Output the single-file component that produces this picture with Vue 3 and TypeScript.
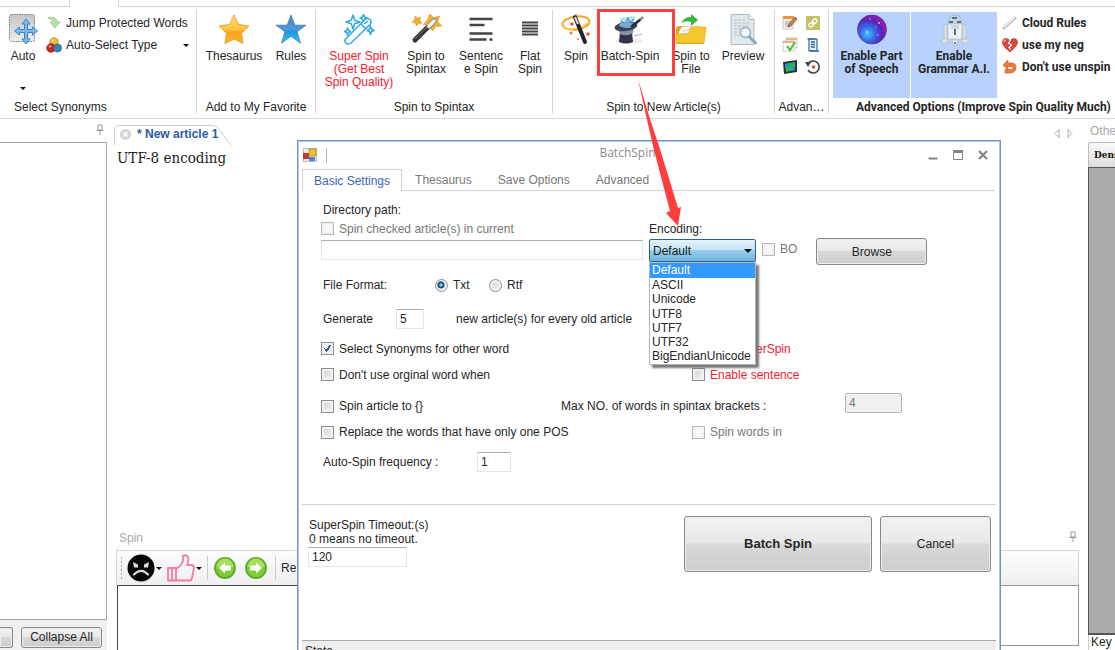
<script setup lang="ts">
import { ref } from 'vue'

const encodings = ['Default', 'ASCII', 'Unicode', 'UTF8', 'UTF7', 'UTF32', 'BigEndianUnicode']
const encoding = ref('Default')
const format = ref('txt')
const settingsTabs = ['Basic Settings', 'Thesaurus', 'Save Options', 'Advanced']
const activeTab = ref('Basic Settings')
const directory = ref('')
const articleCount = ref('5')
const maxWords = ref('4')
const frequency = ref('1')
const timeout = ref('120')
const selectSynonyms = ref(true)
</script>

<template>
  <div class="app">
    <div class="tabstrip">
      <span class="strip-start"></span>
      <span class="strip-active"></span>
      <span class="strip-rest"></span>
    </div>

    <header class="ribbon">
      <section class="group g-select">
        <div class="tools">
          <button class="big w-auto">
            <svg width="30" height="32" viewBox="0 0 30 32">
              <defs>
                <linearGradient id="sq" x1="0" y1="0" x2="0" y2="1"><stop offset="0" stop-color="#c2c4c8" /><stop offset="1" stop-color="#eceef0" /></linearGradient>
              </defs>
              <rect x="1.500" y="0.500" width="25" height="27" rx="2" fill="url(#sq)" stroke="#777" stroke-dasharray="1.500 1" />
              <path d="M18 5l4 5h-2.500v5.500h5V13l5 4-5 4v-2.500h-5V25H22l-4 5-4-5h2.500v-6.500h-5V21l-5-4 5-4v2.500h5V10H14z" fill="#7db9ee" stroke="#3c82c6" stroke-width="1" />
            </svg>
            <span>Auto</span>
            <i class="caret auto-caret"></i>
          </button>
          <div class="list">
            <button class="small">
              <svg width="16" height="16" viewBox="0 0 16 16"><path d="M2 3c5-2 9 0 9 4h3l-5 6-5-6h3c0-2-2-3-5-4z" fill="#b9dcaa" stroke="#96c588" stroke-width="0.800" /></svg>
              <span>Jump Protected Words</span>
            </button>
            <button class="small">
              <svg width="16" height="16" viewBox="0 0 16 16">
                <circle cx="8" cy="5" r="4.200" fill="#e8b93a" stroke="#ad7c14" stroke-width="0.700" />
                <circle cx="5" cy="11" r="4.300" fill="#d3201b" stroke="#8e1d18" stroke-width="0.700" />
                <circle cx="11.500" cy="11" r="4" fill="#3a84ba" stroke="#24597f" stroke-width="0.700" />
                <circle cx="4" cy="9.500" r="1.300" fill="#f19a90" /><circle cx="7" cy="3.500" r="1.200" fill="#fce69a" />
              </svg>
              <span>Auto-Select Type</span>
              <i class="caret type-caret"></i>
            </button>
          </div>
        </div>
        <p class="caption at-left">Select Synonyms</p>
      </section>

      <section class="group g-favorite">
        <div class="tools">
          <button class="big w-64">
            <svg width="32" height="32" viewBox="0 0 32 32">
              <defs><linearGradient id="gold" x1="0" y1="0" x2="0" y2="1"><stop offset="0" stop-color="#ffe070" /><stop offset="0.500" stop-color="#ffc544" /><stop offset="0.600" stop-color="#fba31a" /><stop offset="1" stop-color="#fbb02c" /></linearGradient></defs>
              <path d="M16 1l4.500 9.500L31 12l-7.500 7.500L25 29.500l-9-4.500-9 4.500 1.500-10L1 12l10.500-1.500z" fill="url(#gold)" stroke="#e8a33a" stroke-linejoin="round" />
            </svg>
            <span>Thesaurus</span>
          </button>
          <button class="big w-50">
            <svg width="32" height="32" viewBox="0 0 32 32">
              <defs><linearGradient id="blue" x1="0" y1="0" x2="0" y2="1"><stop offset="0" stop-color="#4a86cc" /><stop offset="0.500" stop-color="#4f97dc" /><stop offset="0.600" stop-color="#1d97dd" /><stop offset="1" stop-color="#36cdf5" /></linearGradient></defs>
              <path d="M16 1l3.800 10.200H31l-9 6.500 3.500 11.500-9.500-7-9.500 7L10 17.700l-9-6.500h11.200z" fill="url(#blue)" stroke="#3c76b8" stroke-width="0.800" stroke-linejoin="round" />
            </svg>
            <span>Rules</span>
          </button>
        </div>
        <p class="caption">Add to My Favorite</p>
      </section>

      <section class="group g-spintax">
        <div class="tools">
          <button class="big w-86 red">
            <svg width="32" height="32" viewBox="0 0 32 32" fill="#fff" stroke="#30a9df" stroke-width="1.500" stroke-linejoin="round">
              <path d="M10 1l1.700 5.300L17 8l-5.300 1.700L10 15l-1.700-5.300L3 8l5.300-1.700z" />
              <path d="M20.500 0.500l1 2.500 2.500 1-2.500 1-1 2.500-1-2.500-2.500-1 2.500-1zM27.500 12l1 3 2.500 1.500-2.500 1-1 3-1-3-2.500-1L26.500 15zM4.500 14l1 2.500 2 1-2 1-1 2.500-1-2.500-2-1 2-1z" />
              <path d="M2.500 25L22 5.500q3-2 5 0t0 5L8 29q-3 2-5 0t-0.500-4z" />
              <path d="M18 10l5 5M21 10l4-3" fill="none" />
            </svg>
            <span>Super Spin<br>(Get Best<br>Spin Quality)</span>
          </button>
          <button class="big w-48">
            <svg width="32" height="32" viewBox="0 0 32 32">
              <path d="M20 0l3.500 4 6-2-2 5.500 4 4.500-6 .5-3 4.500-3-5-6-1.500 4-4.500z" fill="#f8b52b" stroke="#df8f16" stroke-width="0.700" />
              <path d="M5 2l2.500 2 3-.8L10 6.500l2 2.700-3.500.3L6.500 12 5.200 9 2 8l2.500-2z" fill="#f5ae28" stroke="#df8f16" stroke-width="0.500" />
              <path d="M5 26L19 12" stroke="#353535" stroke-width="5" stroke-linecap="round" />
              <path d="M19 12l5-5" stroke="#888" stroke-width="5.500" stroke-linecap="round" />
              <path d="M19 12l5-5" stroke="#f0f0f0" stroke-width="3.500" stroke-linecap="round" />
              <path d="M5 25l12-12" stroke="#777" stroke-width="1" />
            </svg>
            <span>Spin to<br>Spintax</span>
          </button>
          <button class="big w-62">
            <svg width="32" height="32" viewBox="0 0 32 32"><path d="M4.500 5h23M4.500 11h15M4.500 19.500h23M4.500 25.500h17M24.500 25.500h3" stroke="#444" stroke-width="2.600" /></svg>
            <span>Sentenc<br>e Spin</span>
          </button>
          <button class="big w-36">
            <svg width="32" height="32" viewBox="0 0 32 32"><path d="M8 8.500h16M8 11.500h16M8 14.500h16M8 17.500h16M8 20.500h16" stroke="#444" stroke-width="1.800" /></svg>
            <span>Flat<br>Spin</span>
          </button>
        </div>
        <p class="caption">Spin to Spintax</p>
      </section>

      <section class="group g-article">
        <div class="tools">
          <button class="big w-46">
            <svg width="32" height="32" viewBox="0 0 32 32">
              <ellipse cx="16" cy="9" rx="13.500" ry="6.500" fill="none" stroke="#f6a21b" stroke-width="2" transform="rotate(-8 16 9)" />
              <path d="M3 12q8 8 26-4" fill="none" stroke="#ffd15a" stroke-width="1.500" />
              <path d="M15 3L25 28" stroke="#25242a" stroke-width="4" stroke-linecap="round" /><path d="M15 3l3 7" stroke="#ddd" stroke-width="2" />
              <circle cx="12" cy="10" r="1.800" fill="#e9562c" /><circle cx="11" cy="19" r="1.500" fill="#ed7c48" /><circle cx="28" cy="20" r="1.800" fill="#e9562c" /><circle cx="18" cy="25" r="1" fill="#ed7c48" /><circle cx="16" cy="1" r="1" fill="#ed7c48" />
            </svg>
            <span>Spin</span>
          </button>
          <button class="big w-62">
            <svg width="32" height="32" viewBox="0 0 32 32">
              <path d="M6 4l15-2-2 10H5z" fill="#b9e3f6" /><path d="M7 7l4 3 3-6 2 5 4-4" stroke="#45a6e2" fill="none" stroke-width="1.500" />
              <ellipse cx="15" cy="27" rx="14" ry="2.500" fill="#ececec" />
              <path d="M6 18l-1 10q7 3 14 0l-1-10z" fill="#353348" /><path d="M4 14q8 5 16-1l-1 6q-6 4-13 1z" fill="#8a93ad" />
              <ellipse cx="12" cy="12.500" rx="11.500" ry="4.500" transform="rotate(-7 12 12.500)" fill="#3b4052" /><ellipse cx="13" cy="11" rx="8" ry="3" fill="#77a9cf" />
              <path d="M17 13L27 5" stroke="#272b38" stroke-width="2.600" /><path d="M26 6l3-3" stroke="#888" stroke-width="2.400" /><path d="M20 22l8-2" stroke="#aaa" />
              <circle cx="10" cy="4" r="1" fill="#eed85c" /><circle cx="17" cy="3" r="1" fill="#eed85c" />
            </svg>
            <span>Batch-Spin</span>
          </button>
          <button class="big w-60">
            <svg width="32" height="32" viewBox="0 0 32 32">
              <path d="M1 14l2-2h7l2 2h17v16H1z" fill="#dfa31c" />
              <path d="M4 18l3-5 17-1 3 3v8H4z" fill="#f8f8f4" stroke="#ddd" /><path d="M7 17l12-2M7 20l14-2" stroke="#d0d0d0" />
              <path d="M1 29V20h12l3-7h15l-2 16z" fill="#f7c72d" stroke="#e3ad20" stroke-width="0.700" />
              <path d="M6 9q4-7 10-6V0l7 6-7 6V8q-5-2-10 1z" fill="#35b63d" />
            </svg>
            <span>Spin to<br>File</span>
          </button>
          <button class="big w-44">
            <svg width="32" height="32" viewBox="0 0 32 32">
              <path d="M4 0.500h18l5 5v25H4z" fill="#e2e9ed" stroke="#aebac1" /><path d="M22 0.500v5h5" fill="#f8fafb" stroke="#aebac1" />
              <path d="M7 6h12M7 9h16M7 12h16M7 15h8M7 18h7M7 21h7" stroke="#b4bec5" stroke-width="1" stroke-dasharray="3 1" />
              <circle cx="18.500" cy="18.500" r="5" fill="#f2f8fc" stroke="#a7b7c3" stroke-width="1.800" /><path d="M22.500 23l6 6" stroke="#8ca6b9" stroke-width="3" stroke-linecap="round" />
            </svg>
            <span>Preview</span>
          </button>
        </div>
        <p class="caption">Spin to New Article(s)</p>
      </section>

      <section class="group g-advan">
        <div class="mini">
          <button aria-label="Edit rules"><svg width="16" height="16" viewBox="0 0 16 16"><path d="M1 2h10v12H1z" fill="#eee" stroke="#ccc" /><path d="M1 1h11v3H1z" fill="#e9963e" /><path d="M3 7h6M3 9h5M3 11h4" stroke="#aaa" /><path d="M6 12l1-3 6-7 2 2-6 7z" fill="#c8833e" stroke="#71462a" stroke-width="0.700" /></svg></button>
          <button aria-label="Links"><svg width="16" height="16" viewBox="0 0 16 16"><rect x="1" y="1" width="14" height="14" rx="1" fill="#c4c262" /><g transform="rotate(-45 8 8)" fill="none" stroke="#fff" stroke-width="1.200"><rect x="3" y="6" width="5" height="4" rx="2" /><rect x="8" y="6" width="5" height="4" rx="2" /><path d="M6 8h4" /></g></svg></button>
          <button aria-label="Check articles"><svg width="16" height="16" viewBox="0 0 16 16"><path d="M4 1h11v10H4z" fill="#f4f4f2" stroke="#ccc" /><path d="M4 1h11v2H4z" fill="#e7b67c" /><path d="M1 4h11v10H1z" fill="#fff" stroke="#ccc" /><path d="M1 4h11v2H1z" fill="#e7b67c" /><path d="M5 9l3 4 5-8" fill="none" stroke="#5fbd43" stroke-width="2.200" /></svg></button>
          <button aria-label="Script"><svg width="16" height="16" viewBox="0 0 16 16"><path d="M4 2h8v12H4z" fill="#e7eff8" stroke="#39689f" stroke-width="1.200" /><path d="M2.500 2h8M5 14h9M6 5h4M6 7.500h4M6 10h4" stroke="#39689f" stroke-width="1.300" /></svg></button>
          <button aria-label="Map"><svg width="16" height="16" viewBox="0 0 16 16"><path d="M1 3l14-2v12L2 15z" fill="#29333c" /><path d="M3 5l10-2v8L4 13z" fill="#24b855" /><path d="M3 5l5-1-1 4-4 1zM10 8l3-1v4l-4 1z" fill="#2b8fc9" /></svg></button>
          <button aria-label="Restore"><svg width="16" height="16" viewBox="0 0 16 16"><path d="M3 5a6 6 0 1 1 0 6" fill="none" stroke="#444" stroke-width="1.600" /><path d="M0 3l6 0-3 5z" fill="#444" /><circle cx="8.500" cy="8" r="1.700" fill="#e14a36" /></svg></button>
        </div>
        <p class="caption">Advan…</p>
      </section>

      <section class="group g-options">
        <div class="tools">
          <button class="big on w-77">
            <svg width="32" height="32" viewBox="0 0 32 32">
              <defs><radialGradient id="orb" cx="0.350" cy="0.650" r="0.700"><stop offset="0" stop-color="#40d0f8" /><stop offset="0.350" stop-color="#376bea" /><stop offset="0.700" stop-color="#5924b5" /><stop offset="1" stop-color="#a221a9" /></radialGradient></defs>
              <circle cx="16" cy="15.500" r="14.500" fill="url(#orb)" stroke="#4b1d94" stroke-width="0.600" /><g fill="#d9c9ff"><circle cx="14" cy="5" r="0.700" /><circle cx="23" cy="9" r="0.900" /><circle cx="20" cy="13" r="0.600" /><circle cx="11" cy="18" r="0.900" /><circle cx="22" cy="21" r="0.700" /></g>
            </svg>
            <span>Enable Part<br>of Speech</span>
          </button>
          <button class="big on w-86">
            <svg width="32" height="32" viewBox="0 0 32 32">
              <path d="M10 10q0-9 7-9t7 9z" fill="#c9d2d8" stroke="#a3afb6" stroke-width="0.700" /><path d="M14 3h5v2h-5zM11 7h4v2h-4zM19 7h4v2h-4z" fill="#4476a9" />
              <path d="M10 10h14v15H10z" fill="#eef0f0" stroke="#b5bdc0" stroke-width="0.700" /><path d="M6 11h3v14H6zM25 11h3v14h-3z" fill="#dde2e3" stroke="#b5bdc0" stroke-width="0.700" /><path d="M4 25h6v4H4zM24 25h6v4h-6z" fill="#dfe3e5" stroke="#b5bdc0" stroke-width="0.700" />
              <path d="M13 12h8M13 14h8" stroke="#aeb9be" /><path d="M16 15h2v6h-2z" fill="#3676ad" /><path d="M14 26h6l-1 5h-4z" fill="#e9ebec" stroke="#b5bdc0" stroke-width="0.700" /><circle cx="17" cy="29" r="1" fill="#3676ad" />
            </svg>
            <span>Enable<br>Grammar A.I.</span>
          </button>
          <div class="list strong">
            <button class="small"><svg width="16" height="16" viewBox="0 0 16 16"><path d="M2 13L13 3" stroke="#b9b9b9" stroke-width="3" stroke-linecap="round" /><path d="M2 12.500L13 2.500" stroke="#ececec" stroke-width="1.500" /></svg><span>Cloud Rules</span></button>
            <button class="small"><svg width="16" height="16" viewBox="0 0 16 16"><path d="M8 15Q0 9 0.500 5T4 1.500q3 0 4 3 1-3 4-3t3.500 3.500T8 15z" fill="#d9473f" stroke="#aa2e2a" stroke-width="0.600" /><path d="M8.500 3l-2 3 3 2-2.500 2.500 1.500 2" fill="none" stroke="#fff" stroke-width="1.200" /><path d="M2 5q0-2 2-2" stroke="#f5aaa4" fill="none" stroke-width="1.500" /></svg><span>use my neg</span></button>
            <button class="small"><svg width="16" height="16" viewBox="0 0 16 16"><path d="M6 1v3h4q4 0 4 4.500T9 14H3v-3.500h6q2 0 2-1.500T9 7.500H6V11L1 6z" fill="#ec7832" stroke="#cf5e1e" stroke-width="0.600" /></svg><span>Don't use unspin</span></button>
          </div>
        </div>
        <p class="caption strong at-option">Advanced Options (Improve Spin Quality Much)</p>
      </section>
    </header>

    <main class="workspace">
      <aside class="tree">
        <div class="tree-head"><svg class="pin" width="8" height="11" viewBox="0 0 8 11"><path d="M2 1h4v5H2zM0.500 6.500h7M4 7v4" fill="none" stroke="#999" /></svg></div>
        <div class="tree-box"></div>
        <div class="tree-foot">
          <button class="win-btn stub" aria-label="Expand all"></button>
          <button class="win-btn collapse">Collapse All</button>
        </div>
      </aside>

      <section class="center">
        <div class="doc-tabs">
          <button class="doc-tab">
            <svg class="tab-shape" width="120" height="20" viewBox="0 0 120 20"><path d="M0.500 20V4q0-3.500 4-3.500h94q4 0 7 4l7 10q2 4 5 5" fill="none" stroke="#ccc" /></svg>
            <svg width="11" height="11" viewBox="0 0 11 11"><circle cx="5.500" cy="5.500" r="5.500" fill="#d5d5d5" /><path d="M3.500 3.500l4 4M7.500 3.500l-4 4" stroke="#fff" stroke-width="1.500" /></svg>
            <span>* New article 1</span>
          </button>
          <svg class="nav" width="20" height="9" viewBox="0 0 20 9"><path d="M5 0.500v8L1 4.500zM14 0.500v8l4-4z" fill="none" stroke="#aaa" /></svg>
        </div>
        <div class="document">UTF-8 encoding</div>
        <div class="spin-head"><span>Spin</span><svg class="pin" width="8" height="11" viewBox="0 0 8 11"><path d="M2 1h4v5H2zM0.500 6.500h7M4 7v4" fill="none" stroke="#999" /></svg></div>
        <div class="toolbar">
          <i class="grip"></i>
          <button aria-label="Dislike"><svg width="28" height="28" viewBox="0 0 28 28"><circle cx="14" cy="14" r="13.500" fill="#050505" /><path d="M6 8l5 2.500v3H7zM22 8l-5 2.500v3h4z" fill="#ddd" /><path d="M7 20.500q7-7 14 0" fill="none" stroke="#ddd" stroke-width="2.200" stroke-linecap="round" /></svg><i class="caret"></i></button>
          <button aria-label="Like"><svg width="28" height="28" viewBox="0 0 28 28"><path d="M1 14h8v12.500H1zM5 14v12.500M9 15q5-3 7-8V2q3-2 5 1 1 3-1 8h5q2 0 2 3l-2 10q0 2.500-3 2.500H9z" fill="none" stroke="#fa79a4" stroke-width="1.800" stroke-linejoin="round" /></svg><i class="caret"></i></button>
          <i class="sep"></i>
          <button aria-label="Back" class="round"><svg width="24" height="24" viewBox="0 0 24 24"><circle cx="12" cy="12" r="10" fill="#82cb38" stroke="#5eaa2a" stroke-width="1.800" /><path d="M3.500 11a8.500 8.500 0 0 1 17 0z" fill="#a6df5a" /><path d="M6 12l6-5.500v3h6v5h-6v3z" fill="#fff" /></svg></button>
          <button aria-label="Forward" class="round"><svg width="24" height="24" viewBox="0 0 24 24"><circle cx="12" cy="12" r="10" fill="#82cb38" stroke="#5eaa2a" stroke-width="1.800" /><path d="M3.500 11a8.500 8.500 0 0 1 17 0z" fill="#a6df5a" /><path d="M18 12l-6-5.500v3H6v5h6v3z" fill="#fff" /></svg></button>
          <i class="sep"></i>
          <span>Re</span>
        </div>
        <div class="result">
          <div class="result-left"></div>
          <div class="result-right"></div>
        </div>
      </section>

      <aside class="others">
        <div class="others-head">Others</div>
        <div class="others-tab">Density</div>
        <div class="others-body"></div>
        <div class="others-key">Key</div>
      </aside>
    </main>

    <section class="dialog" role="dialog" aria-label="BatchSpin">
      <div class="titlebar">
        <svg width="14" height="14" viewBox="0 0 14 14"><rect x="0.500" y="0.500" width="13" height="13" fill="#eee" stroke="#bbb" /><path d="M0 5h6v6H0z" fill="#c8372e" /><path d="M6 1h7v7H6z" fill="#f3be2e" stroke="#b38411" stroke-width="0.700" /><path d="M6 9h6v4H6z" fill="#4a84e0" /></svg>
        <i class="title-sep"></i>
        <h1>BatchSpin</h1>
        <div class="win-controls">
          <button aria-label="Minimize"><svg width="10" height="10" viewBox="0 0 10 10"><path d="M0.500 8.500h9" stroke="#858585" stroke-width="2" /></svg></button>
          <button aria-label="Maximize"><svg width="10" height="10" viewBox="0 0 10 10"><path d="M0.500 0.500h9v9h-9z" fill="none" stroke="#858585" /><path d="M0 1.500h10" stroke="#858585" stroke-width="3" /></svg></button>
          <button aria-label="Close"><svg width="10" height="10" viewBox="0 0 10 10"><path d="M1 1l8 8M9 1L1 9" stroke="#858585" stroke-width="2.200" /></svg></button>
        </div>
      </div>

      <nav class="tabs" role="tablist">
        <button v-for="tab in settingsTabs" :key="tab" role="tab" :class="{ active: tab === activeTab }" :aria-selected="tab === activeTab" @click="activeTab = tab">{{ tab }}</button>
      </nav>

      <form class="settings" @submit.prevent>
        <div class="row r-path"><label class="inset" for="dir">Directory path:</label></div>
        <div class="row r-current">
          <label class="check off col-a"><input type="checkbox" disabled>Spin checked article(s) in current</label>
          <label for="enc">Encoding:</label>
        </div>
        <div class="row r-dir">
          <input id="dir" v-model="directory" class="text dir" type="text">
          <div class="combo">
            <select id="enc" v-model="encoding"><option v-for="name in encodings" :key="name">{{ name }}</option></select>
            <i class="caret combo-caret"></i>
            <ul class="options" aria-label="Encoding choices">
              <li v-for="name in encodings" :key="name" :class="{ picked: name === encoding }" @click="encoding = name">{{ name }}</li>
            </ul>
          </div>
          <label class="check off bo"><input type="checkbox" disabled>BO</label>
          <button type="button" class="win-btn browse">Browse</button>
        </div>
        <div class="row r-format">
          <span class="inset format-label">File Format:</span>
          <label class="check radio"><input v-model="format" type="radio" name="format" value="txt">Txt</label>
          <label class="check radio"><input v-model="format" type="radio" name="format" value="rtf">Rtf</label>
        </div>
        <div class="row r-count">
          <label class="inset count-label" for="count">Generate</label>
          <input id="count" v-model="articleCount" class="text count" type="text">
          <span class="count-note">new article(s) for every old article</span>
        </div>
        <div class="row r-synonym">
          <label class="check col-b"><input v-model="selectSynonyms" type="checkbox">Select Synonyms for other word</label>
          <label class="check red"><input type="checkbox">Use SuperSpin</label>
        </div>
        <div class="row r-original">
          <label class="check col-b"><input type="checkbox">Don't use orginal word when</label>
          <label class="check red"><input type="checkbox">Enable sentence</label>
        </div>
        <div class="row r-article">
          <label class="check col-c"><input type="checkbox">Spin article to {}</label>
          <label class="max-label" for="max">Max NO. of words in spintax brackets :</label>
          <input id="max" v-model="maxWords" class="text max" type="text" disabled>
        </div>
        <div class="row r-replace">
          <label class="check col-b"><input type="checkbox">Replace the words that have only one POS</label>
          <label class="check off"><input type="checkbox" disabled>Spin words in</label>
        </div>
        <div class="row r-frequency">
          <label class="inset freq-label" for="freq">Auto-Spin frequency :</label>
          <input id="freq" v-model="frequency" class="text freq" type="text">
        </div>
      </form>

      <footer class="actions">
        <div class="timeout">
          <label for="timeout">SuperSpin Timeout:(s)<br>0 means no timeout.</label>
          <input id="timeout" v-model="timeout" class="text" type="text">
        </div>
        <button class="win-btn batch">Batch Spin</button>
        <button class="win-btn cancel">Cancel</button>
      </footer>
      <div class="status">State</div>
    </section>

    <div class="highlight"></div>
    <svg class="arrow" width="50" height="150" viewBox="0 0 50 150"><path d="M1 1L10 42l7 30 16 61-4 2 12 13 3-19-3 1L23 71 13 41z" fill="#ff3d3d" /></svg>
  </div>
</template>

<style>
body {
  margin: 0;
  overflow: hidden;
}
</style>

<style scoped>
* {
  box-sizing: border-box;
}
.app {
  position: relative;
  display: flex;
  flex-direction: column;
  height: 100vh;
  overflow: hidden;
  background: #fff;
  color: #262626;
  font: 12px/14px "Liberation Sans", Arial, sans-serif;
}
button {
  margin: 0;
  padding: 0;
  border: 0;
  background: none;
  color: inherit;
  font: inherit;
}
svg {
  display: block;
  flex: none;
}
.caret {
  width: 0;
  height: 0;
  border: 3px solid transparent;
  border-top-color: #111;
  border-bottom: 0;
}

/* Ribbon */
.tabstrip {
  display: flex;
  flex: none;
  height: 7px;
}
.strip-start {
  width: 69px;
  border-bottom: 1px solid #d4d4d4;
}
.strip-active {
  width: 50px;
  border: 1px solid #d4d4d4;
  border-width: 0 1px;
}
.strip-rest {
  flex: 1;
  border-bottom: 1px solid #d4d4d4;
}
.ribbon {
  display: flex;
  flex: none;
  padding: 3px 0 4px;
  border-bottom: 1px solid #d8d8d8;
}
.group {
  display: flex;
  flex: none;
  flex-direction: column;
  height: 104px;
  border-right: 1px solid #d6d6d6;
}
.g-select { width: 197px; }
.g-favorite { width: 119px; }
.g-favorite .tools { padding-left: 5px; }
.g-spintax { width: 237px; }
.g-article { width: 222px; }
.g-advan { width: 54px; }
.g-options {
  flex: 1;
  min-width: 0;
  padding-left: 4px;
  border-right: 0;
}
.tools {
  display: flex;
  flex: 1;
}
.big {
  display: flex;
  flex: none;
  flex-direction: column;
  align-items: center;
  gap: 4px;
  padding-top: 4px;
  line-height: 13px;
}
.w-auto { width: 46px; }
.w-36 { width: 36px; }
.w-44 { width: 44px; }
.w-46 { width: 46px; }
.w-48 { width: 48px; }
.w-50 { width: 50px; }
.w-60 { width: 60px; }
.w-62 { width: 62px; }
.w-64 { width: 64px; }
.w-77 { width: 77px; }
.w-86 { width: 86px; }
.auto-caret { margin-top: 20px; }
.red { color: #f5202c; }
.on {
  height: 86px;
  margin: 2px 1px 0 0;
  padding-top: 2px;
  background: #b8d2fd;
}
.on,
.strong {
  font-family: Roboto, "Liberation Sans", sans-serif;
  font-weight: bold;
}
.list {
  display: flex;
  flex-direction: column;
  padding-top: 2px;
}
.small {
  display: flex;
  align-items: center;
  gap: 4px;
  height: 22px;
  white-space: nowrap;
}
.type-caret { margin-left: 22px; }
.on + .list { padding-left: 4px; }
.caption {
  flex: none;
  margin: 0;
  text-align: center;
  white-space: nowrap;
}
.at-left {
  padding-left: 14px;
  text-align: left;
}
.at-option {
  padding-left: 23px;
  text-align: left;
}
.mini {
  display: grid;
  flex: 1;
  grid-template-columns: 16px 16px;
  grid-auto-rows: 22px;
  align-items: center;
  column-gap: 7px;
  padding: 2px 0 0 7px;
}

/* Workspace */
.workspace {
  display: flex;
  flex: 1;
  min-height: 0;
}
.tree {
  display: flex;
  flex: none;
  flex-direction: column;
  width: 107px;
}
.tree-head {
  display: flex;
  justify-content: flex-end;
  height: 23px;
  padding: 5px 3px 0 0;
}
.tree-box {
  flex: 1;
  border: 1px solid #a3a5ab;
  border-left: 0;
}
.tree-foot {
  display: flex;
  align-items: center;
  gap: 8px;
  height: 30px;
  padding-top: 4px;
  background: #f0f0f0;
}
.win-btn {
  border: 1px solid #898989;
  border-radius: 3px;
  background: linear-gradient(#f3f3f3, #e8e8e8 48%, #d9d9d9 50%, #cdcdcd);
  box-shadow: inset 0 0 0 1px #ececec;
}
.stub {
  width: 13px;
  height: 21px;
  border-left: 0;
  border-radius: 0 3px 3px 0;
}
.collapse {
  width: 81px;
  height: 21px;
}
.center {
  display: flex;
  flex: 1;
  flex-direction: column;
  min-width: 0;
  padding: 6px 9px 0 7px;
}
.doc-tabs {
  display: flex;
  align-items: flex-start;
  justify-content: space-between;
}
.doc-tab {
  position: relative;
  display: flex;
  align-items: center;
  gap: 6px;
  height: 18px;
  padding-left: 6px;
  color: #2c5ba2;
  font-weight: bold;
}
.tab-shape {
  position: absolute;
  top: 0;
  left: 0;
}
.nav { margin: 4px 5px 0 0; }
.document {
  flex: 1;
  padding: 5px 0 0 3px;
  color: #222;
  font: 15px/20px "DejaVu Serif Condensed", "DejaVu Serif", serif;
}
.spin-head {
  display: flex;
  justify-content: space-between;
  height: 20px;
  padding: 1px 2px 0 5px;
  color: #aaa;
}
.toolbar {
  display: flex;
  flex: none;
  align-items: center;
  height: 35px;
  margin-left: 2px;
  padding-left: 4px;
  border: 1px solid #d6d6d6;
  border-bottom: 0;
  background: linear-gradient(#fdfdfd, #efefef);
}
.toolbar button {
  display: flex;
  align-items: center;
  gap: 1px;
  margin-right: 5px;
}
.grip {
  width: 1px;
  height: 22px;
  margin-right: 5px;
  background: repeating-linear-gradient(#aaa 0 2px, transparent 2px 4px);
}
.sep {
  width: 1px;
  height: 24px;
  margin-right: 5px;
  background: #ccc;
}
.toolbar .round { margin-right: 7px; }
.result {
  display: flex;
  flex: none;
  height: 65px;
  margin-left: 3px;
}
.result-left {
  width: 300px;
  border: 1px solid #444;
  border-width: 1px 0 0 1px;
}
.result-right {
  flex: 1;
  height: 61px;
  border: 1px solid #92959b;
  border-left: 0;
}
.others {
  display: flex;
  flex: none;
  flex-direction: column;
  width: 27px;
  overflow: hidden;
}
.others-head {
  height: 23px;
  padding: 5px 0 0 2px;
  color: #aaa;
}
.others-tab {
  height: 25px;
  padding: 5px 0 0 5px;
  border: 1px solid #bbb;
  border-width: 1px 0 0 1px;
  border-radius: 3px 0 0;
  background: linear-gradient(#fafafa, #ddd);
  color: #111;
  font: bold 10px/13px "DejaVu Serif Condensed", "DejaVu Serif", serif;
}
.others-body {
  flex: 1;
  border: 1px solid #555;
  border-width: 1px 0 2px 1px;
  background: #ababab;
}
.others-key {
  height: 15px;
  padding-left: 2px;
  border-left: 1px solid #ccc;
}

/* Batch dialog */
.dialog {
  position: absolute;
  top: 140px;
  right: 114px;
  left: 297px;
  padding: 0 4px;
  border: 1px solid #6c94c9;
  background: #fff;
  box-shadow: inset 0 0 0 1px #b3c8e6;
}
.titlebar {
  display: flex;
  align-items: center;
  height: 28px;
  padding: 0 8px 0 1px;
}
.title-sep {
  width: 1px;
  height: 15px;
  margin-left: 9px;
  background: #b5b5b5;
}
h1 {
  flex: 1;
  margin: 0;
  padding-bottom: 4px;
  color: #8b8b8b;
  font: 12px/14px "Open Sans", "Noto Sans", sans-serif;
  text-align: center;
}
.win-controls {
  display: flex;
  gap: 15px;
}
.tabs {
  display: flex;
  height: 22px;
  margin-right: 1px;
}
.tabs button {
  padding: 0 13px;
  border-bottom: 1px solid #d2d2d2;
  color: #777;
}
.tabs .active {
  padding: 0 11px;
  border: 1px solid #d2d2d2;
  border-bottom: 0;
  color: #3c69b0;
}
.tabs::after {
  flex: 1;
  border-bottom: 1px solid #d2d2d2;
  content: "";
}
.settings {
  padding: 10px 0 25px 19px;
  border-bottom: 1px solid #d2d2d2;
}
.row {
  display: flex;
  align-items: center;
}
.inset { padding-left: 2px; }
.r-path { height: 18px; }
.r-current { height: 19px; }
.r-dir {
  align-items: flex-start;
  height: 28px;
}
.r-format { height: 38px; }
.r-count { height: 29px; }
.r-synonym { height: 31px; }
.r-original { height: 21px; }
.r-article {
  height: 26px;
  margin-top: 8px;
}
.r-replace { height: 26px; }
.r-frequency { height: 34px; }
.col-a { width: 328px; }
.col-b { width: 371px; }
.col-c { width: 240px; }
.format-label { width: 114px; }
.count-label { width: 75px; }
.count-note { padding-left: 32px; }
.max-label { width: 284px; }
.freq-label { width: 156px; }
.check {
  display: flex;
  flex: none;
  align-items: center;
  gap: 5px;
}
.check input {
  width: 13px;
  height: 13px;
  margin: 0;
  border: 1px solid #8e8f8f;
  background: linear-gradient(135deg, #cfd2d6, #f4f4f4);
  box-shadow: inset 0 0 0 2px #f2f2f2;
  appearance: none;
}
.check input[type="checkbox"]:checked {
  background: linear-gradient(-60deg, transparent 40%, #3c539e 40% 62%, transparent 62%) 4px 1px / 5px 8px no-repeat, linear-gradient(60deg, transparent 38%, #3c539e 38% 65%, transparent 65%) 2px 5px / 3px 4px no-repeat, #e9edf5;
}
.radio { width: 54px; }
.radio input {
  border-radius: 50%;
}
.radio input:checked {
  background: radial-gradient(circle at 45% 45%, #7fd0ee 0 1px, #1b6795 2px, #123e5f 3px, #eee 4px);
  box-shadow: none;
}
.off { color: #777; }
.off input {
  border-color: #b8b8b8;
  background: #f8f8f8;
}
.text {
  height: 20px;
  padding: 0 3px;
  border: 1px solid #e2e5ec;
  border-top-color: #abadb3;
  background: #fff;
  color: #262626;
  font: inherit;
}
.dir {
  width: 322px;
  margin: 2px 6px 0 0;
}
.count { width: 28px; }
.freq { width: 34px; }
.max {
  width: 57px;
  border: 1px solid #b5b5b5;
  border-radius: 2px;
  background: #f0f0f0;
  color: #777;
}
.r-article .max { margin-bottom: 7px; }
.combo {
  position: relative;
  width: 107px;
  margin: 1px 6px 0 0;
}
.combo select {
  display: block;
  width: 100%;
  height: 23px;
  padding: 0 3px;
  border: 1px solid #2c628b;
  border-radius: 2px;
  background: linear-gradient(#e3f3fb, #c5e5f6 48%, #98cfeb 50%, #6fb4db);
  color: #1d1d1d;
  font: inherit;
  appearance: none;
}
.combo-caret {
  position: absolute;
  top: 10px;
  right: 4px;
  border-width: 4px;
  border-bottom: 0;
}
.options {
  position: absolute;
  z-index: 2;
  top: 23px;
  left: 0;
  width: 107px;
  margin: 0;
  padding: 0 0 1px;
  border: 1px solid #b5b5b5;
  background: #fff;
  box-shadow: 3px 3px 2px #777;
  list-style: none;
}
.options li {
  padding-left: 2px;
  line-height: 14px;
}
.options li:first-child,
.options li:nth-child(3) { padding-bottom: 1px; }
.picked {
  background: #3399ff;
  color: #fff;
}
.bo { height: 22px; }
.browse {
  width: 111px;
  height: 27px;
  margin-left: 19px;
}
.actions {
  display: flex;
  align-items: flex-start;
  height: 135px;
  padding: 11px 5px 0 6px;
}
.timeout {
  display: flex;
  flex: 1;
  flex-direction: column;
  align-items: flex-start;
  gap: 1px;
  padding-top: 2px;
}
.timeout label { padding-left: 1px; }
.timeout input { width: 99px; }
.batch {
  width: 188px;
  height: 56px;
  margin-right: 8px;
  font-size: 13px;
  font-weight: bold;
}
.cancel {
  width: 111px;
  height: 56px;
}
.status {
  height: 20px;
  padding: 3px 3px 0;
  border-top: 1px solid #a9a9a9;
  background: #f0eded;
}

/* Callout */
.highlight {
  position: absolute;
  top: 9px;
  left: 597px;
  width: 78px;
  height: 67px;
  border: 3px solid #ff3d3d;
}
.arrow {
  position: absolute;
  top: 78px;
  left: 637px;
}
</style>
